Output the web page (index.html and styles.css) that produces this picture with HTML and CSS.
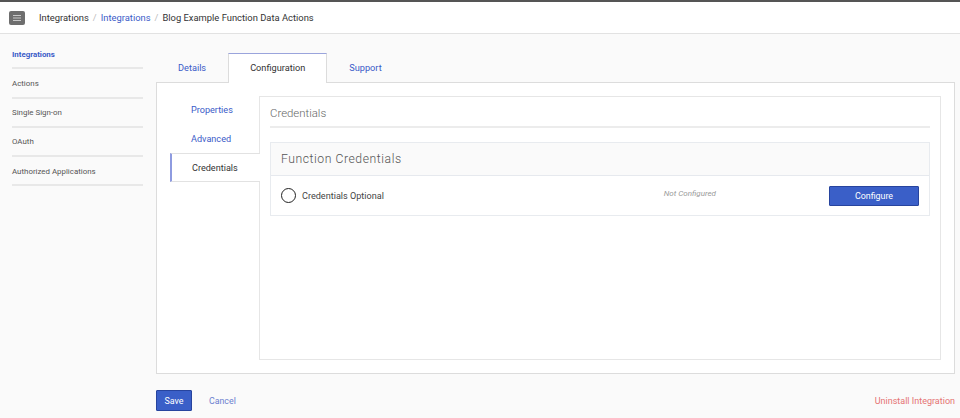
FILE: index.html
```html
<!DOCTYPE html>
<html>
<head>
<meta charset="utf-8">
<link rel="stylesheet" href="styles.css">
</head>
<body>
<header class="topbar">
  <button class="menu-btn" aria-label="menu">
    <svg width="8" height="6" viewBox="0 0 8 6"><path d="M0 0.5H8M0 3H8M0 5.5H8" stroke="#c8c8c8" stroke-width="1"/></svg>
  </button>
  <nav class="crumbs">
    <span class="crumb">Integrations</span><span class="sep">/</span><span class="crumb link">Integrations</span><span class="sep">/</span><span class="crumb">Blog Example Function Data Actions</span>
  </nav>
</header>
<div class="layout">
  <aside class="sidebar">
    <div class="side-item active">Integrations</div>
    <div class="side-item">Actions</div>
    <div class="side-item">Single Sign-on</div>
    <div class="side-item">OAuth</div>
    <div class="side-item">Authorized Applications</div>
  </aside>
  <main class="main">
    <div class="tabs">
      <div class="tab">Details</div>
      <div class="tab active">Configuration</div>
      <div class="tab">Support</div>
    </div>
    <div class="panel">
      <div class="subnav">
        <div class="sub-item">Properties</div>
        <div class="sub-item">Advanced</div>
        <div class="sub-item active">Credentials</div>
      </div>
      <section class="content">
        <h2 class="content-title">Credentials</h2>
        <div class="card">
          <div class="card-head">Function Credentials</div>
          <div class="card-row">
            <span class="circle"></span>
            <span class="cred-name">Credentials Optional</span>
            <span class="status">Not Configured</span>
            <button class="btn configure">Configure</button>
          </div>
        </div>
      </section>
    </div>
    <div class="footer">
      <button class="btn save">Save</button>
      <span class="cancel">Cancel</span>
      <span class="uninstall">Uninstall Integration</span>
    </div>
  </main>
</div>
</body>
</html>
```
FILE: styles.css
```css
* { box-sizing: border-box; }
html, body { margin: 0; padding: 0; }
body {
  font-family: Roboto, "Liberation Sans", Arial, sans-serif;
  background: #fafafa;
  color: #333;
  width: 960px;
  height: 418px;
  overflow: hidden;
}
.topbar {
  height: 34px;
  background: #fff;
  border-top: 2px solid #555;
  border-bottom: 1px solid #e2e2e2;
  display: flex;
  align-items: center;
  padding-left: 9px;
}
.menu-btn {
  width: 16px;
  height: 14px;
  background: #6e6e6e;
  border: 0;
  border-radius: 2px;
  padding: 0;
  display: flex;
  align-items: center;
  justify-content: center;
  margin-top: 1px;
}
.crumbs {
  margin-left: 14px;
  font-size: 9.4px;
  color: #333;
  display: flex;
  align-items: center;
}
.sep { color: #bbb; margin: 0 4px; }
.link { color: #3b5bc8; }
.layout { display: flex; }
.sidebar {
  width: 131px;
  margin-left: 12px;
  padding-top: 6px;
}
.side-item {
  height: 29.25px;
  border-bottom: 2px solid #e8e8e8;
  font-size: 7.9px;
  color: #555;
  display: flex;
  align-items: center;
  padding-top: 1px;
}
.side-item.active { color: #3b5bc8; font-weight: 700; }
.main {
  margin-left: 13px;
  width: 799px;
  padding-top: 19px;
}
.tabs { display: flex; height: 29px; position: relative; z-index: 1; }
.tab {
  padding: 0 21px;
  font-size: 9.2px;
  color: #3b5bc8;
  display: flex;
  align-items: center;
  height: 30px;
  border: 1px solid transparent;
  border-bottom: 0;
  padding-bottom: 2px;
}
.tab.active {
  background: #fff;
  color: #333;
  border-color: #dcdcdc;
  border-top: 1px solid #9aa4dc;
}
.panel {
  background: #fff;
  border: 1px solid #dcdcdc;
  height: 292px;
  display: flex;
  padding: 13px 13px 13px 13px;
}
.subnav { width: 89px; padding-top: 0; }
.sub-item {
  height: 28.5px;
  font-size: 9.1px;
  color: #3b5bc8;
  display: flex;
  align-items: center;
  padding-left: 21px;
}
.sub-item.active {
  color: #333;
  background: #fff;
  border-top: 1px solid #e2e2e2;
  border-bottom: 1px solid #e2e2e2;
  border-left: 2px solid #8e9be0;
  padding-left: 20px;
  height: 29px;
  margin-right: -1px;
  position: relative;
  z-index: 1;
}
.content {
  flex: 1;
  border: 1px solid #e6e6e6;
  padding: 0 10px;
}
.content-title {
  margin: 0;
  font-size: 11.4px;
  font-weight: 300;
  color: #666;
  height: 31px;
  display: flex;
  align-items: center;
  padding-top: 2px;
  border-bottom: 2px solid #ececec;
}
.card {
  margin-top: 14px;
  border: 1px solid #e8ebef;
  background: #fff;
}
.card-head {
  height: 33px;
  background: #fafafa;
  border-bottom: 1px solid #e6e9ee;
  font-size: 12.2px;
  font-weight: 300;
  letter-spacing: 0.55px;
  color: #555;
  display: flex;
  align-items: center;
  padding-left: 10px;
}
.card-row {
  height: 39px;
  display: flex;
  align-items: center;
  padding: 0 10px;
}
.circle {
  width: 15px;
  height: 15px;
  border: 1.3px solid #222;
  border-radius: 50%;
  margin-right: 6px;
}
.cred-name { font-size: 9.1px; color: #444; }
.status {
  font-size: 8px;
  font-style: italic;
  color: #999;
  margin-left: auto;
  margin-right: 113px;
  margin-top: -4px;
}
.btn {
  font-family: inherit;
  background: #3a5fc8;
  color: #fff;
  border: 1px solid #27449e;
  border-radius: 1px;
  font-size: 8.9px;
  padding: 0;
  display: flex;
  align-items: center;
  justify-content: center;
}
.configure { width: 90px; height: 20px; }
.footer {
  display: flex;
  align-items: center;
  margin-top: 16px;
  height: 21px;
}
.save { width: 36px; height: 21px; }
.cancel { font-size: 8.8px; color: #6b80d0; margin-left: 17px; }
.uninstall { font-size: 9px; color: #e57373; margin-left: auto; }
```
